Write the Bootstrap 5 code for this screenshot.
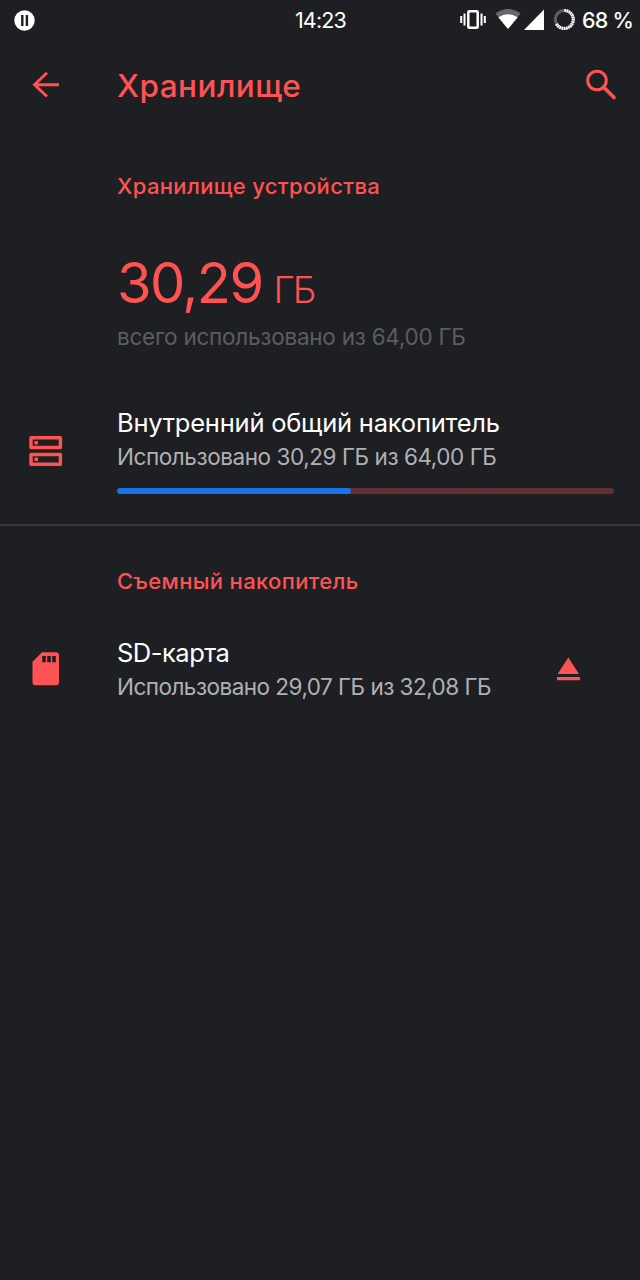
<!DOCTYPE html>
<html lang="ru" data-bs-theme="dark">
<head>
<meta charset="utf-8">
<meta name="viewport" content="width=device-width, initial-scale=1">
<title>Хранилище</title>
<link href="https://cdn.jsdelivr.net/npm/bootstrap@5.3.0/dist/css/bootstrap.min.css" rel="stylesheet">
<style>
  :root { --accent: #ff5252; --surface: #1e1f23; }
  body { background: var(--surface); color: #fff; font-family: Inter, Roboto, "Liberation Sans", sans-serif; min-height: 1280px; }
  svg { display: block; flex: none; }
  .accent { color: var(--accent); }
  .statusbar { height: 40px; padding: 0 7px 0 14px; display: grid; grid-template-columns: 1fr auto 1fr; line-height: 40px; }
  .clock { font-size: 21.5px; letter-spacing: -.8px; margin: 0 6px 0 0; }
  .battery { font-size: 21.5px; font-weight: 500; letter-spacing: -.8px; margin-left: 5px; }
  .appbar { height: 91px; border-bottom: 1px solid #1a1b1e; }
  .lead-col { width: 117px; flex: none; padding-left: 27px; }
  .app-title { font-size: 31.5px; line-height: 40px; font-weight: 500; letter-spacing: .45px; color: inherit; padding-top: 2px; }
  .indent { padding-left: 117px; }
  .section-title { font-size: 22px; line-height: 32px; font-weight: 500; letter-spacing: .35px; margin: 39px 0 0; }
  .total { font-size: 56px; line-height: 64px; height: 64px; letter-spacing: -1.6px; margin-top: 49px; }
  .total-unit { font-size: 37px; line-height: 1; letter-spacing: -2px; font-weight: 300; margin-left: 11px; }
  .sub { font-size: 22.5px; line-height: 32px; letter-spacing: -.43px; color: #b0b1b3; padding-top: 1px; }
  .sub.tight { letter-spacing: -.52px; }
  .sub.dim { color: #5c5d60; margin-top: 5px; letter-spacing: -.25px; }
  .item-title { font-size: 25.5px; line-height: 34px; letter-spacing: -.23px; }
  .item-title.short { letter-spacing: -.5px; }
  .usage { height: 6px; border-radius: 3px; background: #632f32; margin: 15px 26px 0 0; }
  .usage .progress-bar { background: #1a73e8; border-radius: 3px; }
  .volume { padding-bottom: 30px; border-bottom: 2px solid #37383b; margin-top: 53px; }
  .volume + .section-title { margin-top: 38px; }
  .removable { margin-top: 39px; }
  .eject { margin-right: 56px; }
</style>
</head>
<body>
<header>
  <div class="statusbar align-items-center">
    <svg width="21" height="21" viewBox="0 0 21 21"><circle cx="10.5" cy="10.5" r="10.2" fill="#fff"/><path d="M8.3 5v11M12.9 5v11" stroke="#1e1f23" stroke-width="2.4"/></svg>
    <span class="clock">14:23</span>
    <div class="d-flex align-items-center justify-content-end">
      <svg width="118" height="24" viewBox="459 8 118 24">
        <g fill="none" stroke="#fff">
          <rect x="468.300" y="11.200" width="9.400" height="16.600" rx="1" stroke-width="2.500"/>
          <path d="M464.500 13.500v12M461.200 16v7M481.500 13.500v12M484.800 16v7" stroke-width="2"/>
        </g>
        <path d="M495.500 13.500Q508 4.500 520.500 13.500L508 29Z" fill="#68696c"/>
        <path d="M498.300 17.200Q508 11.200 517.700 17.200L508 29Z" fill="#fff"/>
        <path d="M544 9.500V30H524Z" fill="#fff"/>
        <circle cx="564.300" cy="19.500" r="9" fill="none" stroke="#5f6063" stroke-width="3"/>
        <circle cx="564.300" cy="19.500" r="9" fill="none" stroke="#fff" stroke-width="3.200" pathLength="100" stroke-dasharray="2.900 1.100 2.900 1.100 2.900 1.100 2.900 1.100 2.900 1.100 2.900 1.100 2.900 1.100 2.900 1.100 2.900 1.100 2.900 1.100 2.900 1.100 2.900 1.100 2.900 1.100 2.900 1.100 2.900 1.100 2.900 1.100 2.900 40" transform="rotate(-90 564.300 19.500)"/>
      </svg>
      <span class="battery text-nowrap">68 %</span>
    </div>
  </div>
  <nav class="appbar d-flex align-items-center accent">
    <div class="lead-col"><svg width="38" height="32" viewBox="27 69 38 32" fill="none" stroke="currentColor" stroke-width="2.900"><path d="M59 84.700H34.500M47 72.800L34.500 84.700L47 96.500"/></svg></div>
    <h1 class="app-title m-0 flex-grow-1">Хранилище</h1>
    <svg class="me-3" width="40" height="40" viewBox="584 65 40 40" fill="none" stroke="currentColor"><circle cx="597" cy="80.500" r="9.300" stroke-width="3"/><path d="M603.500 87L614 97.600" stroke-width="3.600" stroke-linecap="round"/></svg>
  </nav>
</header>
<main>
  <section>
    <div class="indent">
      <h2 class="section-title accent"><span>Хранилище устройства</span></h2>
      <div class="total accent"><span>30,29</span><span class="total-unit">ГБ</span></div>
      <div class="sub dim"><span>всего использовано из 64,00 ГБ</span></div>
    </div>
    <div class="volume d-flex">
      <div class="lead-col accent pt-4"><svg class="mt-1" width="38" height="36" viewBox="27 434 38 36"><g fill="none" stroke="currentColor" stroke-width="3.400" stroke-linejoin="round"><rect x="31" y="437.700" width="29.400" height="9.800"/><rect x="31" y="454.500" width="29.400" height="9.800"/></g><path d="M34.500 441h3.500v3.500h-3.500zM34.500 457.500h3.500v3.500h-3.500z" fill="currentColor"/></svg></div>
      <div class="flex-grow-1">
        <div class="item-title"><span>Внутренний общий накопитель</span></div>
        <div class="sub"><span>Использовано 30,29 ГБ из 64,00 ГБ</span></div>
        <div class="progress usage"><div class="progress-bar" style="width:47.100%"></div></div>
      </div>
    </div>
  </section>
  <section>
    <h2 class="section-title accent indent"><span>Съемный накопитель</span></h2>
    <div class="removable d-flex align-items-center">
      <div class="lead-col accent"><svg width="38" height="38" viewBox="27 650 38 38"><path fill="currentColor" fill-rule="evenodd" d="M42 651.200H56q3 0 3 3V681.200q0 3-3 3H35.500q-3 0-3-3V660.700ZM42.200 655v6.200h3.600V655ZM47.200 655v6.200h3.600V655ZM52.200 655v6.200h3.600V655Z"/></svg></div>
      <div class="flex-grow-1">
        <div class="item-title short"><span>SD-карта</span></div>
        <div class="sub tight"><span>Использовано 29,07 ГБ из 32,08 ГБ</span></div>
      </div>
      <svg class="accent eject" width="32" height="32" viewBox="552 653 32 32" fill="currentColor"><path d="M568.300 656.500L579 673H557.600ZM557 676h23v3.200h-23z"/></svg>
    </div>
  </section>
</main>
<script src="https://cdn.jsdelivr.net/npm/bootstrap@5.3.0/dist/js/bootstrap.bundle.min.js"></script>
</body>
</html>
